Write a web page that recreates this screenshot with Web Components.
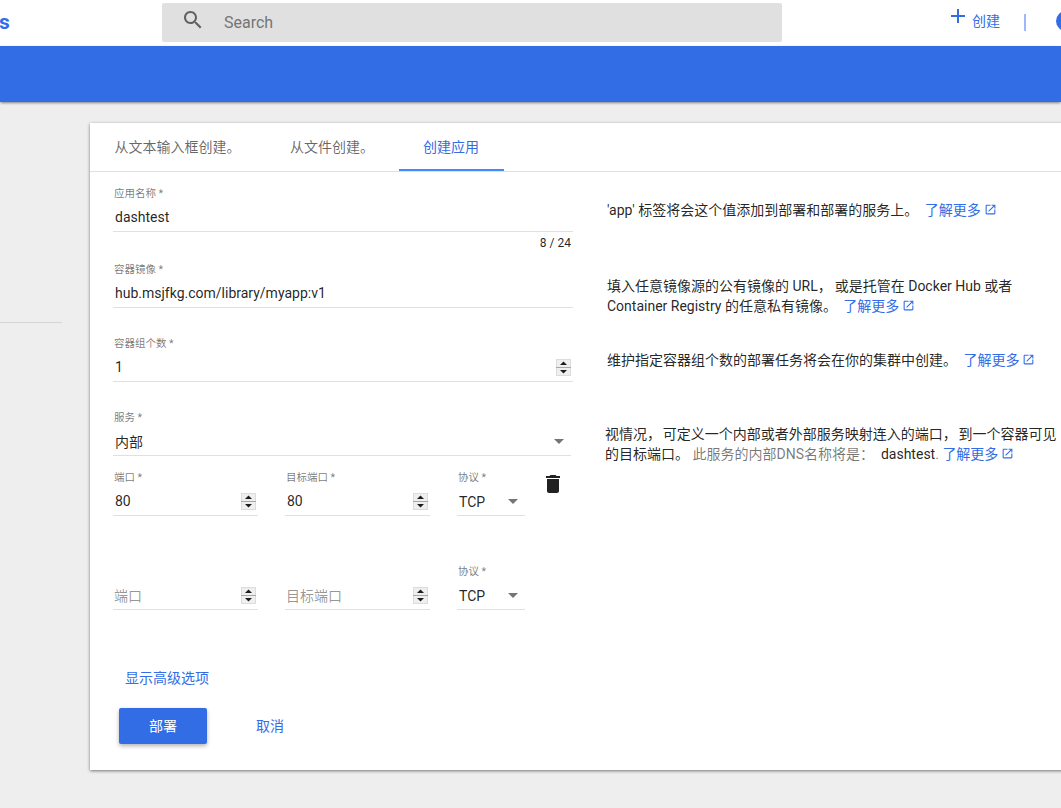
<!DOCTYPE html>
<html lang="zh">
<head>
<meta charset="utf-8">
<title>创建应用</title>
<style>
html,body{margin:0;padding:0;height:100%;overflow:hidden;background:#eee;}
body{font-family:Roboto,"Noto Sans CJK SC","Noto Sans",sans-serif;font-size:14px;color:rgba(0,0,0,.87);}
</style>
</head>
<body>
<k-page>
  <k-topbar slot="top"></k-topbar>
  <k-card slot="main">
    <k-tabs slot="tabs">
      <k-tab>从文本输入框创建。</k-tab>
      <k-tab>从文件创建。</k-tab>
      <k-tab active>创建应用</k-tab>
    </k-tabs>
    <k-row h="76">
      <div slot="field">
        <k-field label="应用名称" required width="460">dashtest</k-field>
        <k-count>8 / 24</k-count>
      </div>
      <k-help slot="help">'app' 标签将会这个值添加到部署和部署的服务上。 <k-more></k-more></k-help>
    </k-row>
    <k-row h="74">
      <k-field slot="field" label="容器镜像" required width="460">hub.msjfkg.com/library/myapp:v1</k-field>
      <k-help slot="help">填入任意镜像源的公有镜像的 URL<k-comma style="--w:3px">，</k-comma>或是托管在 Docker Hub 或者<br>Container Registry 的任意私有镜像。 <k-more></k-more></k-help>
    </k-row>
    <k-row h="74">
      <k-field slot="field" label="容器组个数" required width="460">1<k-spin slot="end"></k-spin></k-field>
      <k-help slot="help">维护指定容器组个数的部署任务将会在你的集群中创建。 <k-more></k-more></k-help>
    </k-row>
    <k-row h="60">
      <k-field slot="field" label="服务" required width="458">内部<k-caret slot="end"></k-caret></k-field>
      <k-help slot="help" shift="-2">视情况<k-comma style="--w:1.7px">，</k-comma>可定义一个内部或者外部服务映射连入的端口<k-comma style="--w:1.7px">，</k-comma>到一个容器可见<br>的目标端口。 <k-muted>此服务的内部DNS名称将是： </k-muted>&nbsp;dashtest<k-muted>.</k-muted> <k-more tight></k-more></k-help>
    </k-row>
    <k-ports gap="48">
      <k-field label="端口" required width="145">80<k-spin slot="end"></k-spin></k-field>
      <k-field label="目标端口" required width="145">80<k-spin slot="end"></k-spin></k-field>
      <k-field label="协议" required width="68" select>TCP<k-caret slot="end"></k-caret></k-field>
      <k-trash></k-trash>
    </k-ports>
    <k-ports gap="0">
      <k-field placeholder width="145">端口<k-spin slot="end"></k-spin></k-field>
      <k-field placeholder width="145">目标端口<k-spin slot="end"></k-spin></k-field>
      <k-field label="协议" required width="68" select>TCP<k-caret slot="end"></k-caret></k-field>
    </k-ports>
    <k-actions>
      <span slot="advanced">显示高级选项</span>
      <k-button slot="buttons" primary>部署</k-button>
      <k-button slot="buttons">取消</k-button>
    </k-actions>
  </k-card>
</k-page>
<script>
function def(name, css, html, extra){
  const cls = class extends HTMLElement{
    constructor(){
      super();
      const r=this.attachShadow({mode:"open"});
      r.innerHTML="<style>"+css+"</style>"+html;
    }
    connectedCallback(){ if(extra) extra.call(this,this.shadowRoot); }
  };
  customElements.define(name,cls);
}
def("k-page",
 `:host{display:flex;flex-direction:column;height:808px;width:100%;overflow:hidden;}
  .bar{height:56px;background:#326de6;box-shadow:0 2px 2px -1px rgba(0,0,0,.3),0 1px 3px rgba(0,0,0,.2);flex:none;position:relative;z-index:1;}
  .body{display:flex;flex:1;min-height:0;}
  aside{width:90px;flex:none;}
  aside hr{margin:220px 0 0;width:62px;border:0;border-top:1px solid #d6d6d6;}
  main{padding-top:21px;flex:none;width:1100px;}`,
 `<slot name="top"></slot><div class="bar"></div>
  <div class="body"><aside><hr></aside><main><slot name="main"></slot></main></div>`);
def("k-topbar",
 `:host{display:flex;height:46px;background:#fff;align-items:flex-start;flex:none;overflow:hidden;}
  .logo{width:162px;flex:none;color:#326de6;font:700 21px/44px Roboto,sans-serif;margin-left:-1px;}
  .search{margin-top:3px;margin-left:1px;width:620px;height:39px;background:#e0e0e0;border-radius:2px;display:flex;align-items:center;color:#757575;font-size:16px;flex:none;}
  .search svg{margin-left:19px;margin-right:19px;width:24px;height:24px;fill:#616161;position:relative;top:-3px;flex:none;}
  .create{margin-left:164px;display:flex;align-items:flex-start;color:#326de6;font-size:14px;flex:none;}
  .create svg{width:24px;height:24px;fill:#326de6;margin-top:4px;flex:none;}
  .create span{margin-left:2px;line-height:20px;margin-top:11px;}
  .sep{width:2px;height:17px;background:#9db8fb;margin:14px 0 0 24px;flex:none;}
  .dot{width:20px;height:20px;border-radius:50%;background:#326de6;margin:11px 0 0 30px;flex:none;}`,
 `<div class="logo">s</div>
  <div class="search"><svg viewBox="0 0 24 24"><path d="M15.5 14h-.79l-.28-.27C15.41 12.59 16 11.11 16 9.5 16 5.91 13.09 3 9.5 3S3 5.91 3 9.5 5.91 16 9.5 16c1.61 0 3.09-.59 4.23-1.57l.27.28v.79l5 4.99L20.49 19l-4.99-5zm-6 0C7.01 14 5 11.99 5 9.5S7.01 5 9.5 5 14 7.01 14 9.5 11.99 14 9.5 14z"/></svg>Search</div>
  <div class="create"><svg viewBox="0 0 24 24"><path d="M19 13h-6v6h-2v-6H5v-2h6V5h2v6h6v2z"/></svg><span>创建</span></div>
  <div class="sep"></div><div class="dot"></div>`);
def("k-card",
 `:host{display:block;background:#fff;height:647px;box-sizing:border-box;box-shadow:0 1px 3px rgba(0,0,0,.5);}
  .form{padding:14px 0 0 23px;}`,
 `<slot name="tabs"></slot><div class="form"><slot></slot></div>`);
def("k-tabs",
 `:host{display:flex;height:48px;border-bottom:1px solid #e0e0e0;}`,
 `<slot></slot>`);
def("k-tab",
 `:host{display:flex;align-items:center;padding:0 25px 2px 24.5px;font-size:14px;color:rgba(0,0,0,.6);box-sizing:border-box;height:48px;}
  :host([active]){color:#326de6;padding:0 24.5px 2px 24px;box-shadow:inset 0 -2px 0 #448aff;}`,
 `<slot></slot>`);
def("k-row",
 `:host{display:flex;align-items:flex-start;box-sizing:border-box;}
  .f{width:494px;flex:none;}`,
 `<div class="f"><slot name="field"></slot></div><slot name="help"></slot>`,
 function(){ this.style.height=this.getAttribute("h")+"px"; });
def("k-count",
 `:host{display:block;width:458px;text-align:right;font-size:12px;line-height:14px;height:14px;margin-top:4px;color:rgba(0,0,0,.87);}`,
 `<slot></slot>`);
def("k-field",
 `:host{display:block;flex:none;box-sizing:border-box;height:46px;border-bottom:1px solid #e0e0e0;}
  .l{height:14px;line-height:14px;font-size:10.5px;color:rgba(0,0,0,.54);padding:1px 0 0 1px;white-space:nowrap;}
  .v{display:flex;align-items:center;justify-content:space-between;height:28px;margin-top:2px;padding-left:2px;font-size:14px;white-space:nowrap;}
  :host([placeholder]) .v{color:rgba(0,0,0,.42);padding-left:1px;}
  :host([select]) .v span{position:relative;top:1px;}`,
 `<div class="l"></div><div class="v"><span><slot></slot></span><slot name="end"></slot></div>`,
 function(r){
   const w=this.getAttribute("width"); if(w) this.style.width=w+"px";
   const t=this.getAttribute("label");
   r.querySelector(".l").textContent=t?t+(this.hasAttribute("required")?" *":""):"";
 });
def("k-spin",
 `:host{display:block;width:15px;height:17px;margin-right:2.5px;flex:none;line-height:0;}
  svg{display:block}`,
 `<svg width="15" height="17" viewBox="0 0 15 17"><rect width="15" height="17" fill="#dcdcdc"/><rect x="1" y="1" width="13" height="7" fill="#efefef"/><rect x="1" y="9" width="13" height="7" fill="#efefef"/><rect x="0" y="8" width="15" height="1" fill="#a8a8a8"/><path d="M7.5 2.5 L11 6 H4Z" fill="#1c1c1c"/><path d="M7.5 14.5 L11 11 H4Z" fill="#1c1c1c"/></svg>`);
def("k-caret",
 `:host{display:block;width:0;height:0;border-left:5px solid transparent;border-right:5px solid transparent;border-top:5px solid #757575;margin-right:7px;flex:none;}`,
 ``);
def("k-help",
 `:host{display:block;padding-top:14px;font-size:14px;line-height:20px;white-space:nowrap;color:rgba(0,0,0,.87);}`,
 `<slot></slot>`,
 function(){const s=this.getAttribute("shift"); if(s) this.style.marginLeft=s+"px";});
def("k-comma",`:host{letter-spacing:var(--w,0);}`,`<slot></slot>`);
def("k-muted",`:host{color:rgba(0,0,0,.54);}`,`<slot></slot>`);
def("k-more",
 `:host{display:inline-flex;align-items:center;color:#326de6;margin-left:3px;}
  :host([tight]){margin-left:0;}
  svg{width:13px;height:13px;fill:#326de6;margin-left:3px;position:relative;top:-1px;}`,
 `<span>了解更多</span><svg viewBox="0 0 24 24"><path d="M19 19H5V5h7V3H5c-1.11 0-2 .9-2 2v14c0 1.1.89 2 2 2h14c1.1 0 2-.9 2-2v-7h-2v7zM14 3v2h3.59l-9.83 9.83 1.41 1.41L19 6.41V10h2V3h-7z"/></svg>`);
def("k-ports",
 `:host{display:flex;align-items:flex-start;gap:27px;}`,
 `<slot></slot>`,
 function(){this.style.marginBottom=this.getAttribute("gap")+"px";});
def("k-trash",
 `:host{display:block;width:24px;height:24px;margin:2px 0 0 -11px;flex:none;}
  svg{display:block;fill:#212121;}`,
 `<svg width="24" height="24" viewBox="0 0 24 24"><path d="M6 19c0 1.1.9 2 2 2h8c1.1 0 2-.9 2-2V7H6v12zM19 4h-3.5l-1-1h-5l-1 1H5v2h14V4z"/></svg>`);
def("k-actions",
 `:host{display:block;margin-top:58px;}
  .adv{display:block;margin-left:12px;line-height:20px;color:#326de6;font-size:14px;}
  .btns{display:flex;gap:19px;margin:20px 0 0 6px;}`,
 `<div class="adv"><slot name="advanced"></slot></div><div class="btns"><slot name="buttons"></slot></div>`);
def("k-button",
 `:host{display:flex;align-items:center;justify-content:center;box-sizing:border-box;width:88px;height:36px;padding-bottom:2px;border-radius:2px;color:#326de6;font-size:14px;}
  :host([primary]){background:#326de6;color:#fff;box-shadow:0 2px 4px rgba(0,0,0,.3);}`,
 `<slot></slot>`);
</script>
</body>
</html>
